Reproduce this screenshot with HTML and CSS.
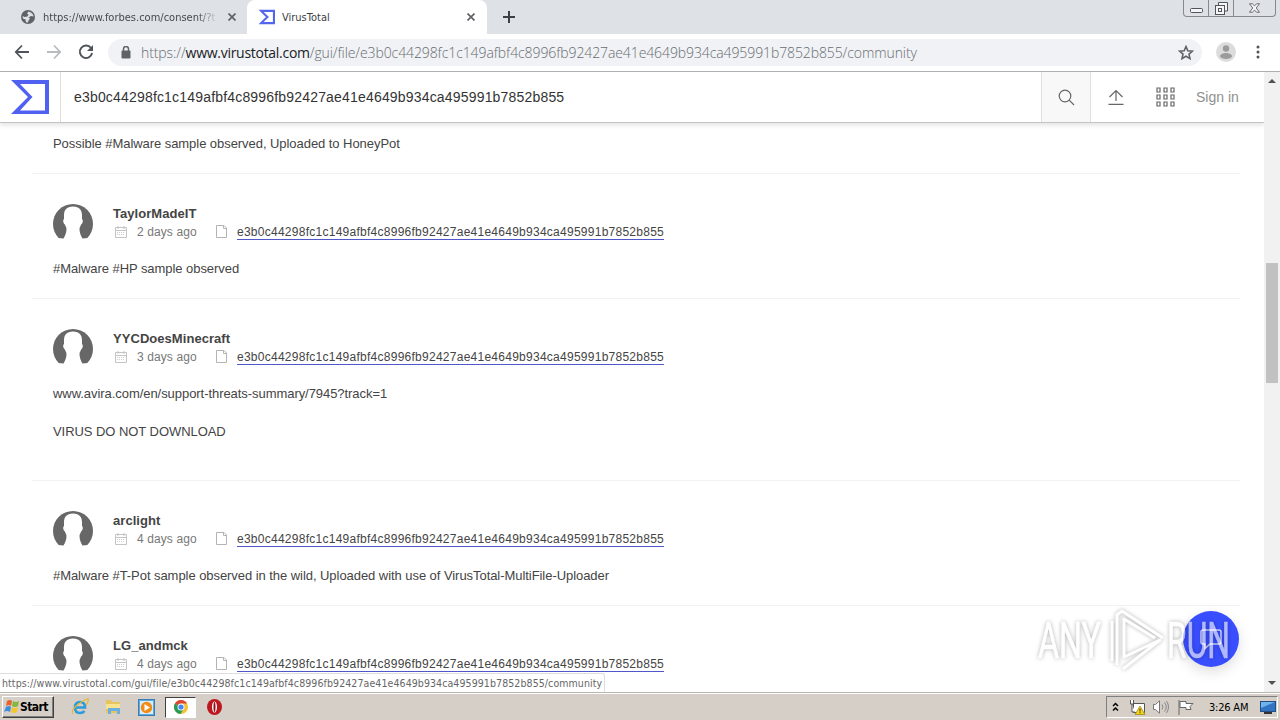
FILE: index.html
```html
<!DOCTYPE html>
<html lang="en">
<head>
    <meta charset="UTF-8">
    <title>VirusTotal</title>
    <link rel="stylesheet" href="styles.css">
</head>
<body>
<!-- Shared shapes -->
<svg class="defs" width="0" height="0">
    <symbol id="avatar" viewBox="0 0 40 40">
        <circle cx="20" cy="20" r="20" fill="#676767"/>
        <path fill="#fff" d="M20 2.500C13.500 2.500 11 6 11 11.500V15c-1.500 1-.8 4.500 1 5.500.3 2 1.500 2.500 1.500 4.500 0 4-1.500 7-3 9.500L5 34v7h30v-7l-5.500.5c-1.500-2.500-3-5.500-3-9.500 0-2 1.200-2.500 1.500-4.500 1.800-1 2.500-4.500 1-5.500v-3.500C29 6 26.500 2.500 20 2.500z"/>
    </symbol>
    <symbol id="calendar" viewBox="0 0 12 12">
        <path fill="none" stroke="#c4c4c4" d="M.5 1.500h11v10H.5zM3 0v3M9 0v3M1 4.500h10"/>
        <path fill="none" stroke="#cfcfcf" stroke-dasharray="1 1" d="M2 6.500h8M2 8.500h8"/>
    </symbol>
    <symbol id="file" viewBox="0 0 11 13">
        <path fill="none" stroke="#b4b4b4" d="M.5.5h7.500l2.500 2.500v9.500H.5zM7.500.5V3.500h3"/>
    </symbol>
</svg>

<div class="screen">
    <div class="tabs">
        <div class="tab">
            <svg class="tab-icon" width="14" height="14" viewBox="0 0 14 14"><circle cx="7" cy="7" r="7" fill="#5f6368"/><path fill="#dee1e6" d="M7.500 1.500 6 3.500l1.500 1-1 2-3 .5-2-1 .5 2.500 2.500 1 .5 2.700 2 .3.500-2L9 8.500 7.500 7.500 10 6l2.500.5-.5-2-2-2z"/></svg>
            <span class="tab-title faded">https://www.forbes.com/consent/?t</span>
            <svg class="tab-close" width="8" height="8" viewBox="0 0 8 8"><path d="M.5.5l7 7M7.500.5l-7 7"/></svg>
        </div>
        <div class="tab active">
            <svg class="tab-icon" width="16" height="16" viewBox="0 0 38 34"><path fill="none" stroke="#5566ee" stroke-width="5" d="M5 2.500h30.500v29H5L20 17z"/></svg>
            <span class="tab-title">VirusTotal</span>
            <svg class="tab-close" width="8" height="8" viewBox="0 0 8 8"><path d="M.5.5l7 7M7.500.5l-7 7"/></svg>
        </div>
        <svg class="new-tab" width="12" height="12" viewBox="0 0 12 12"><path stroke="#3c4043" stroke-width="2" d="M6 0v12M0 6h12"/></svg>
        <div class="window-buttons">
            <span><svg width="13" height="5" viewBox="0 0 13 5"><rect x=".5" y=".5" width="12" height="4" rx="1"/></svg></span>
            <span><svg width="13" height="13" viewBox="0 0 13 13"><path d="M3.500 3V.5h9v8.500H10"/><rect x=".5" y="3.500" width="9" height="9"/><rect x="3.500" y="6.500" width="3" height="3"/></svg></span>
            <span class="wide"><svg width="11" height="10" viewBox="0 0 13 11"><path d="M.5.5h3.500l2.500 2.500L9 .5h3.500L8.500 5.500l4 5H9L6.500 8 4 10.500H.5l4-5z"/></svg></span>
        </div>
    </div>

    <div class="toolbar">
        <svg class="nav" width="16" height="16" viewBox="0 0 16 16"><path fill="none" stroke="#50545a" stroke-width="1.800" d="M15 8H2M8 1.500L1.800 8 8 14.500"/></svg>
        <svg class="nav" width="16" height="16" viewBox="0 0 16 16"><path fill="none" stroke="#b9bbbe" stroke-width="1.800" d="M1 8h13M8 1.500L14.200 8 8 14.500"/></svg>
        <svg class="nav" width="16" height="16" viewBox="0 0 16 16"><path fill="none" stroke="#50545a" stroke-width="1.900" d="M13 4A6.200 6.200 0 1 0 14.100 9"/><path fill="#50545a" d="M15 1v6H9z"/></svg>
        <div class="address">
            <svg width="10" height="13" viewBox="0 0 10 13"><rect y="4.500" x=".5" width="9" height="8" rx="1" fill="#5f6368"/><path fill="none" stroke="#5f6368" stroke-width="1.500" d="M2.500 5V3a2.500 2.500 0 0 1 5 0v2"/></svg>
            <span class="url"><span class="scheme">https://</span><span class="host">www.virustotal.com</span><span class="path">/gui/file/e3b0c44298fc1c149afbf4c8996fb92427ae41e4649b934ca495991b7852b855/community</span></span>
            <svg class="star" width="16" height="15" viewBox="0 0 16 15"><path fill="none" stroke="#5f6368" stroke-width="1.600" d="M8 1.500l1.800 4.200 4.700.4-3.500 3 1 4.500-4-2.400-4 2.400 1-4.500-3.500-3 4.700-.4z"/></svg>
        </div>
        <svg class="profile" width="20" height="20" viewBox="0 0 20 20"><circle cx="10" cy="10" r="10" fill="#dcdcdc"/><circle cx="10" cy="6.500" r="3.200" fill="#9b9b9b"/><ellipse cx="10" cy="14" rx="6" ry="3" fill="#9b9b9b"/></svg>
        <svg class="more" width="4" height="14" viewBox="0 0 4 14"><g fill="#50545a"><circle cx="2" cy="2" r="1.500"/><circle cx="2" cy="7" r="1.500"/><circle cx="2" cy="12" r="1.500"/></g></svg>
    </div>

    <div class="viewport">
        <div class="page">
            <div class="header">
                <div class="logo"><svg width="38" height="34" viewBox="0 0 38 34"><path fill="#5060f0" fill-rule="evenodd" d="M0 0h38v34H0L17 17zM9 4L21.500 17 9 30.500h25V4z"/></svg></div>
                <div class="query">e3b0c44298fc1c149afbf4c8996fb92427ae41e4649b934ca495991b7852b855</div>
                <div class="search"><svg width="17" height="17" viewBox="0 0 17 17"><g fill="none" stroke="#666" stroke-width="1.200"><circle cx="7" cy="7" r="5.800"/><path d="M11.200 11.200l4.800 4.800"/></g></svg></div>
                <svg class="upload" width="16" height="16" viewBox="0 0 16 16"><path fill="none" stroke="#666" stroke-width="1.200" d="M.5 15.400h15M8 12V2M1.500 8L8 1.500 14.500 8"/></svg>
                <svg class="apps" width="19" height="20" viewBox="0 0 19 20"><g fill="none" stroke="#666" stroke-width="1.200"><path d="M1 1h3v4H1zM8 1h3v4H8zM15 1h3v4h-3zM1 8h3v4H1zM8 8h3v4H8zM15 8h3v4h-3zM1 15h3v4H1zM8 15h3v4H8zM15 15h3v4h-3z"/></g></svg>
                <span class="sign-in">Sign in</span>
            </div>

            <div class="comments">
                <div class="comment first">
                    <p>Possible #Malware sample observed, Uploaded to HoneyPot</p>
                </div>
                <div class="comment">
                    <div class="comment-head">
                        <svg class="avatar"><use href="#avatar"/></svg>
                        <div class="info">
                            <div class="user">TaylorMadeIT</div>
                            <div class="meta"><svg class="calendar"><use href="#calendar"/></svg><span class="date">2 days ago</span><svg class="file"><use href="#file"/></svg><a class="hash">e3b0c44298fc1c149afbf4c8996fb92427ae41e4649b934ca495991b7852b855</a></div>
                        </div>
                    </div>
                    <p>#Malware #HP sample observed</p>
                </div>
                <div class="comment">
                    <div class="comment-head">
                        <svg class="avatar"><use href="#avatar"/></svg>
                        <div class="info">
                            <div class="user">YYCDoesMinecraft</div>
                            <div class="meta"><svg class="calendar"><use href="#calendar"/></svg><span class="date">3 days ago</span><svg class="file"><use href="#file"/></svg><a class="hash">e3b0c44298fc1c149afbf4c8996fb92427ae41e4649b934ca495991b7852b855</a></div>
                        </div>
                    </div>
                    <p>www.avira.com/en/support-threats-summary/7945?track=1<br><br>VIRUS DO NOT DOWNLOAD<br><br></p>
                </div>
                <div class="comment">
                    <div class="comment-head">
                        <svg class="avatar"><use href="#avatar"/></svg>
                        <div class="info">
                            <div class="user">arclight</div>
                            <div class="meta"><svg class="calendar"><use href="#calendar"/></svg><span class="date">4 days ago</span><svg class="file"><use href="#file"/></svg><a class="hash">e3b0c44298fc1c149afbf4c8996fb92427ae41e4649b934ca495991b7852b855</a></div>
                        </div>
                    </div>
                    <p>#Malware #T-Pot sample observed in the wild, Uploaded with use of VirusTotal-MultiFile-Uploader</p>
                </div>
                <div class="comment">
                    <div class="comment-head">
                        <svg class="avatar"><use href="#avatar"/></svg>
                        <div class="info">
                            <div class="user">LG_andmck</div>
                            <div class="meta"><svg class="calendar"><use href="#calendar"/></svg><span class="date">4 days ago</span><svg class="file"><use href="#file"/></svg><a class="hash">e3b0c44298fc1c149afbf4c8996fb92427ae41e4649b934ca495991b7852b855</a></div>
                        </div>
                    </div>
                </div>
            </div>
        </div>

        <div class="scrollbar">
            <span class="arrow up"></span>
            <span class="thumb"></span>
            <span class="arrow down"></span>
        </div>

        <div class="status">https://www.virustotal.com/gui/file/e3b0c44298fc1c149afbf4c8996fb92427ae41e4649b934ca495991b7852b855/community</div>
        <div class="chat">
            <svg width="24" height="22" viewBox="0 0 24 22"><path fill="none" stroke="#d3d8ff" stroke-width="1.500" d="M4 2h16q2 0 2 2v10q0 2-2 2h-9l-5 4.500V16H4q-2 0-2-2V4q0-2 2-2z"/></svg>
        </div>
        <!-- Watermark -->
        <svg class="watermark" width="210" height="70" viewBox="0 0 210 70">
            <text x="8" y="53" textLength="63" lengthAdjust="spacingAndGlyphs">ANY</text>
            <text x="137" y="53" textLength="63" lengthAdjust="spacingAndGlyphs">RUN</text>
            <g fill="none" stroke-width="3" stroke-linejoin="round">
                <path d="M82 56V16"/>
                <path d="M87 60V10l5-4 41 27"/>
                <path d="M125 33L94 14v38l36-17-37 29"/>
            </g>
        </svg>
    </div>

    <div class="taskbar">
        <div class="start">
            <svg width="16" height="16" viewBox="0 0 16 16"><path fill="#e8632c" d="M3 2q3-2 5 0L7 7Q5 5 2 7z"/><path fill="#84b83c" d="M9 2q3 2 6 0l-1 5q-3 2-6 0z"/><path fill="#3b8edb" d="M2 8q3-2 5 0l-1 5q-3-2-6 0z"/><path fill="#f5c431" d="M8 8q3 2 6 0l-1 5q-3 2-6 0z"/></svg>
            <span>Start</span>
        </div>
        <svg class="task-icon ie" width="18" height="18" viewBox="0 0 18 18"><path fill="none" stroke="#2d9bd9" stroke-width="2.600" d="M4 9.500h10Q14 4 9 4T4 9.500 9 15q3 0 4.500-2"/><path fill="none" stroke="#e8b92e" stroke-width="1.200" d="M2 16Q-1 12 9 5t8-2q0 2-2 4"/></svg>
        <svg class="task-icon" width="17" height="16" viewBox="0 0 17 16"><path fill="#e9c45c" d="M1 1h5l1 2h8v11H1z"/><path fill="#f8e391" d="M1 5h14v5H1z"/><path fill="#69afe0" d="M3 9h12v6h-3v-3H6v3H3z"/></svg>
        <svg class="task-icon" width="17" height="17" viewBox="0 0 17 17"><rect x=".5" y=".5" width="16" height="16" fill="#60a9df" stroke="#397eb5"/><path fill="#d7eefb" d="M2 2h13v13H2z"/><circle cx="8.500" cy="8.500" r="5.700" fill="#f18b16"/><path fill="#fff" d="M6.500 5l5.500 3.500-5.500 3.500z"/></svg>
        <div class="task-active">
            <svg width="14" height="14" viewBox="0 0 14 14"><circle cx="7" cy="7" r="7" fill="#f1c232"/><path fill="#db4437" d="M7 7L.9 3.600A7 7 0 0 1 13.100 3.600H7z"/><path fill="#279a55" d="M7 7L.9 3.600A7 7 0 0 0 6.500 14L9.500 9z"/><circle cx="7" cy="7" r="3.500" fill="#fff"/><circle cx="7" cy="7" r="2.600" fill="#4285f4"/></svg>
        </div>
        <svg class="task-icon opera" width="15" height="16" viewBox="0 0 15 16"><ellipse cx="7.500" cy="8" rx="7.500" ry="8" fill="#bd1720"/><ellipse cx="7.500" cy="8" rx="2.500" ry="5.500" fill="#fff"/><ellipse cx="7.500" cy="8" rx="1" ry="5" fill="#901018"/></svg>
        <div class="tray">
            <svg width="7" height="10" viewBox="0 0 7 10"><path fill="none" stroke="#000" stroke-width="1.500" d="M1 4l2.500-2.500L6 4M1 8.500L3.500 6 6 8.500"/></svg>
            <svg class="network" width="17" height="16" viewBox="0 0 17 16"><path fill="#fff" stroke="#555" d="M4.500 4.500h11v9h-11z"/><path fill="#fff" stroke="#555" d="M1.500 1v4h3V1M3 5v8h3"/><path fill="#f4d51d" stroke="#9a8400" stroke-width=".7" d="M11 7l5 8.500H6z"/><path stroke="#222" d="M11 9.500v3M11 13.300v1"/></svg>
            <svg class="sound" width="17" height="14" viewBox="0 0 17 14"><path fill="#fff" stroke="#777" d="M.5 4.500h2L6.500.8v12.400L2.500 9.500h-2z"/><path fill="none" stroke="#888" d="M9 4.500q2 2.500 0 5M11.500 2.500q3.500 4.500 0 9M13.500 1q4 6 0 12"/></svg>
            <svg class="flag" width="17" height="15" viewBox="0 0 17 15"><path fill="#fff" stroke="#666" d="M1 0v15M2 1.500h6v2h7l-3 3 1 3H8v-2H2z"/></svg>
            <span class="clock">3:26 AM</span>
            <svg width="16" height="13" viewBox="0 0 16 13"><rect x=".5" y=".5" width="15" height="10" fill="#3174c4" stroke="#254f82"/><path fill="#6eb3ea" d="M1 1h14L1 7z"/><path fill="#333" d="M4 11h8v2H4z"/></svg>
        </div>
    </div>
</div>
</body>
</html>
```
FILE: styles.css
```css
body {
    margin: 0;
    font-family: "Liberation Sans", Arial, sans-serif;
    background-color: #ffffff;
}

svg {
    display: block;
    flex: none;
}

.defs {
    position: absolute;
}

.screen {
    width: 1280px;
    height: 720px;
    display: flex;
    flex-direction: column;
    overflow: hidden;
}

/* Browser tabs */
.tabs {
    height: 34px;
    display: flex;
    align-items: center;
    background-color: #dee1e6;
}

.tab {
    box-sizing: border-box;
    width: 247px;
    height: 34px;
    padding: 0 11px 0 21px;
    display: flex;
    align-items: center;
    font-family: "DejaVu Sans Condensed", "DejaVu Sans", sans-serif;
    font-size: 11px;
    color: #45494d;
}

.tab.active {
    width: 240px;
    padding-left: 12px;
    padding-right: 12px;
    background-color: #ffffff;
    border-radius: 8px 8px 0 0;
    color: #3c4043;
}

.tab-title {
    flex: 1;
    margin-left: 8px;
    white-space: nowrap;
    overflow: hidden;
}

.active .tab-title {
    margin-left: 7px;
}

.faded {
    margin-right: 10px;
    -webkit-mask-image: linear-gradient(to right, #000 88%, transparent);
    mask-image: linear-gradient(to right, #000 88%, transparent);
}

.tab-close {
    fill: none;
    stroke: #5f6368;
    stroke-width: 1.7;
}

.new-tab {
    margin-left: 16px;
}

.window-buttons {
    box-sizing: border-box;
    align-self: flex-start;
    display: flex;
    width: 93px;
    height: 17px;
    margin-left: auto;
    margin-right: 4px;
    border: 1px solid #858990;
    border-top: none;
    border-radius: 0 0 4px 4px;
}

.window-buttons span {
    width: 24px;
    display: flex;
    justify-content: center;
    align-items: center;
    border-right: 1px solid #858990;
}

.window-buttons .wide {
    width: 41px;
    border-right: none;
}

.window-buttons svg {
    fill: #f5f5f5;
    stroke: #50545c;
}

.window-buttons span:first-child {
    align-items: flex-end;
    padding-bottom: 3px;
    height: 13px;
}

/* Address bar */
.toolbar {
    box-sizing: border-box;
    height: 38px;
    display: flex;
    align-items: center;
    padding-left: 14px;
    padding-bottom: 1px;
    border-bottom: 1px solid #aeafb0;
}

.nav {
    margin-right: 16px;
}

.address {
    width: 1094px;
    height: 27px;
    margin-left: -2px;
    display: flex;
    align-items: center;
    box-sizing: border-box;
    padding: 0 8px 0 13px;
    border-radius: 14px;
    background-color: #f0f2f5;
}

.url {
    flex: 1;
    margin-left: 10px;
    font-family: "Open Sans", sans-serif;
    font-weight: 300;
    font-size: 14px;
    letter-spacing: -0.1px;
    color: #686c70;
    white-space: nowrap;
}

.host {
    color: #202124;
    font-weight: 400;
    letter-spacing: -0.28px;
}

.profile {
    margin-left: 14px;
}

.more {
    margin-left: 20px;
}

/* Page */
.viewport {
    position: relative;
    display: flex;
    height: 620px;
}

.page {
    width: 1264px;
    height: 620px;
    overflow: hidden;
}

.header {
    position: relative;
    height: 50px;
    display: flex;
    align-items: center;
    border-bottom: 1px solid #c4c4c4;
    box-shadow: 0 2px 5px rgba(0, 0, 0, 0.12);
}

.logo {
    width: 49px;
    height: 50px;
    padding-left: 11px;
    display: flex;
    align-items: center;
    border-right: 1px solid #dfdcd9;
}

.query {
    width: 967px;
    padding-left: 13px;
    font-size: 14px;
    letter-spacing: 0.18px;
    color: #333333;
}

.search {
    width: 48px;
    height: 50px;
    display: flex;
    justify-content: center;
    align-items: center;
    border: solid #e0e0e0;
    border-width: 0 1px;
    background-color: #f8f8f8;
}

.upload {
    margin-left: 17px;
}

.apps {
    margin-left: 32px;
}

.sign-in {
    margin-left: 21px;
    font-size: 14px;
    color: #909090;
}

.comments {
    padding: 0 24px 0 32px;
}

.comment {
    padding: 30px 21px 20px;
    border-bottom: 1px solid #f2f2f2;
}

.comment.first {
    padding-top: 11px;
}

.comment-head {
    display: flex;
    height: 40px;
    margin-bottom: 15px;
}

.avatar {
    width: 40px;
    height: 40px;
}

.info {
    margin-left: 20px;
}

.user {
    height: 18px;
    line-height: 20px;
    font-size: 13px;
    font-weight: bold;
    letter-spacing: 0.05px;
    color: #444444;
}

.meta {
    display: flex;
    align-items: center;
    height: 19px;
    font-size: 12px;
    color: #777777;
}

.calendar {
    width: 12px;
    height: 12px;
    margin-left: 2px;
}

.date {
    width: 79px;
    margin-left: 10px;
    letter-spacing: 0.1px;
}

.file {
    width: 11px;
    height: 13px;
}

.hash {
    height: 15px;
    margin-left: 10px;
    line-height: 17px;
    letter-spacing: 0.26px;
    color: #444444;
    border-bottom: 1px solid #5057c8;
}

.comment p {
    margin: 0;
    font-size: 13px;
    line-height: 19px;
    letter-spacing: -0.055px;
    color: #444444;
}

.scrollbar {
    width: 16px;
    background-color: #f1f1f1;
    display: flex;
    flex-direction: column;
    align-items: center;
}

.thumb {
    width: 12px;
    height: 120px;
    margin-top: 180px;
    background-color: #c1c1c1;
}

.arrow {
    border: 4px solid transparent;
}

.up {
    border-top: none;
    border-bottom-color: #505050;
    margin-top: 7px;
}

.down {
    border-bottom: none;
    border-top-color: #505050;
    margin-top: auto;
    margin-bottom: 7px;
}

.status {
    position: absolute;
    left: 0;
    bottom: 0;
    box-sizing: border-box;
    width: 605px;
    height: 19px;
    padding-left: 2px;
    line-height: 19px;
    font-family: "DejaVu Sans Condensed", "DejaVu Sans", sans-serif;
    font-size: 10.5px;
    letter-spacing: 0.09px;
    white-space: nowrap;
    color: #666666;
    background-color: #ffffff;
    border: solid #dedede;
    border-width: 1px 1px 0 0;
    border-radius: 0 3px 0 0;
}

.chat {
    position: absolute;
    right: 41px;
    bottom: 25px;
    width: 56px;
    height: 56px;
    display: flex;
    justify-content: center;
    align-items: center;
    border-radius: 50%;
    background-color: #394eff;
    box-shadow: 0 5px 14px rgba(0, 0, 0, 0.13);
}

.watermark {
    position: absolute;
    right: 40px;
    bottom: 17px;
    overflow: visible;
    stroke: #ffffff;
    opacity: 0.6;
    filter: drop-shadow(0 0 2px rgba(0, 0, 0, 0.5));
}

.watermark text {
    font-family: Roboto, sans-serif;
    font-size: 50px;
    fill: #ffffff;
    stroke-width: 0.6;
}

/* Taskbar */
.taskbar {
    box-sizing: border-box;
    height: 28px;
    display: flex;
    align-items: center;
    padding-top: 1px;
    background-color: #d5cfc7;
    border-top: 1px solid #b8b5af;
    box-shadow: inset 0 1px 0 #ffffff;
}

.start {
    box-sizing: border-box;
    width: 52px;
    height: 22px;
    margin-left: 2px;
    padding-left: 1px;
    display: flex;
    align-items: center;
    border: 1px solid;
    border-color: #ffffff #404040 #404040 #ffffff;
    box-shadow: inset -1px -1px 0 #808080;
    font-family: "DejaVu Sans Condensed", "DejaVu Sans", sans-serif;
    font-size: 12px;
    font-weight: bold;
    letter-spacing: -0.6px;
}

.task-icon {
    margin-left: 16px;
}

.task-icon.ie {
    margin-left: 17px;
}

.task-active {
    box-sizing: border-box;
    width: 31px;
    height: 21px;
    margin-left: 10px;
    display: flex;
    justify-content: center;
    align-items: center;
    border: 1px solid;
    border-color: #404040 #ffffff #ffffff #404040;
    background-color: #ffffff;
}

.task-icon.opera {
    margin-left: 11px;
}

.tray {
    box-sizing: border-box;
    width: 172px;
    height: 22px;
    margin-left: auto;
    margin-right: 2px;
    padding-left: 5px;
    display: flex;
    align-items: center;
    border: 1px solid;
    border-color: #808080 #ffffff #ffffff #808080;
}

.network {
    margin-left: 10px;
}

.sound {
    margin-left: 7px;
}

.flag {
    margin-left: 8px;
}

.clock {
    width: 51px;
    margin-left: 14px;
    font-family: "DejaVu Sans Condensed", "DejaVu Sans", sans-serif;
    font-size: 11px;
    letter-spacing: -0.2px;
    white-space: nowrap;
}
```
